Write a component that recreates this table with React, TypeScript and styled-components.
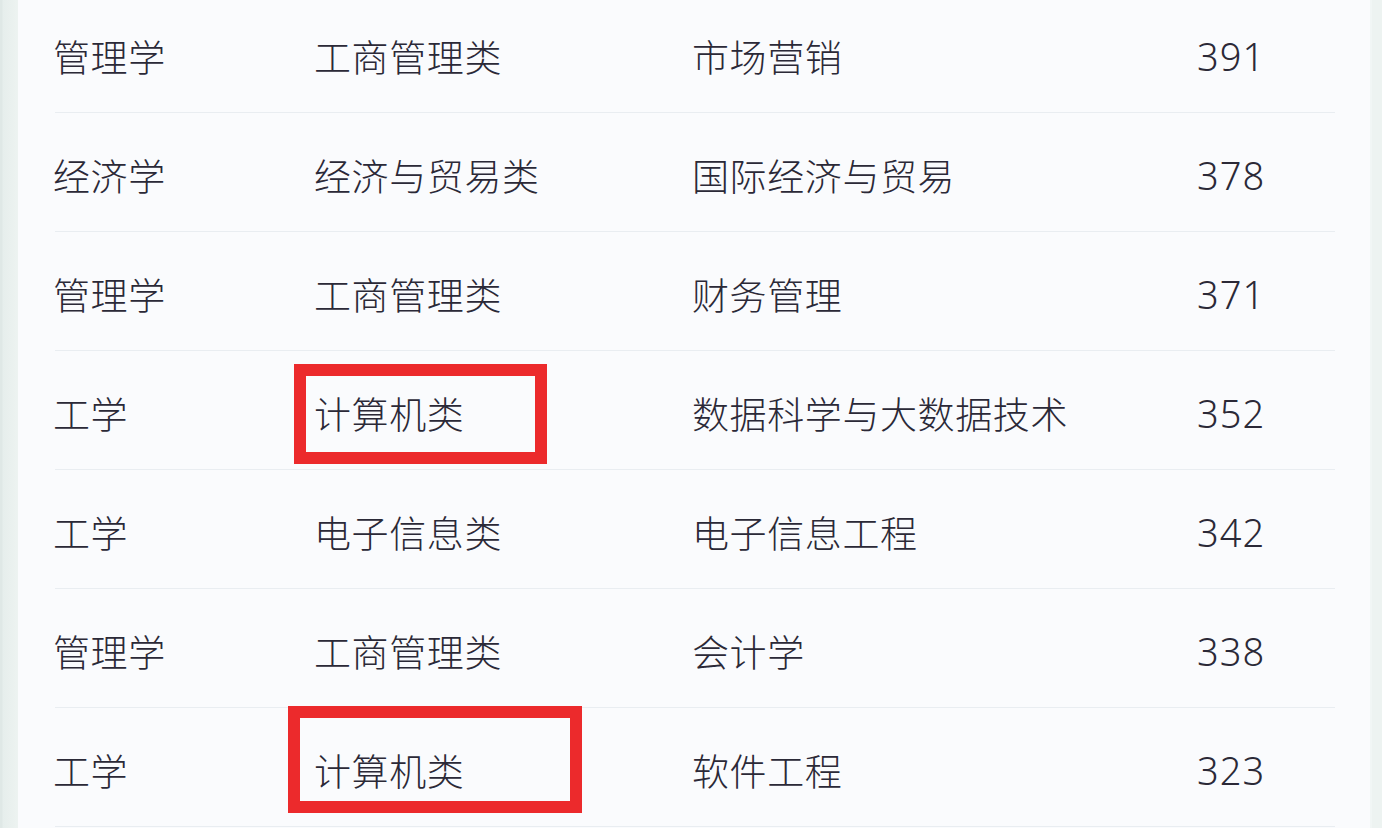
import styled, { createGlobalStyle } from 'styled-components'

const GlobalStyle = createGlobalStyle`
  html, body {
    margin: 0;
    padding: 0;
    background: #eef3f2;
    overflow: hidden;
  }
`

type Highlight = { left: number; width: number; top: number; bottom: number }

const rows: { subject: string; category: string; major: string; score: number; box?: Highlight }[] = [
  { subject: '管理学', category: '工商管理类', major: '市场营销', score: 391 },
  { subject: '经济学', category: '经济与贸易类', major: '国际经济与贸易', score: 378 },
  { subject: '管理学', category: '工商管理类', major: '财务管理', score: 371 },
  {
    subject: '工学',
    category: '计算机类',
    major: '数据科学与大数据技术',
    score: 352,
    box: { left: -20, width: 253, top: 13, bottom: 5 },
  },
  { subject: '工学', category: '电子信息类', major: '电子信息工程', score: 342 },
  { subject: '管理学', category: '工商管理类', major: '会计学', score: 338 },
  {
    subject: '工学',
    category: '计算机类',
    major: '软件工程',
    score: 323,
    box: { left: -26, width: 294, top: -2, bottom: 13 },
  },
]

export default function App() {
  return (
    <>
      <GlobalStyle />
      <Page>
        <Card>
          <Table>
            {rows.map((r, i) => (
              <Row key={i}>
                <Cell>{r.subject}</Cell>
                <Cell>
                  {r.category}
                  {r.box && (
                    <RedBox
                      style={{
                        left: r.box.left,
                        width: r.box.width,
                        top: r.box.top,
                        bottom: r.box.bottom,
                      }}
                    />
                  )}
                </Cell>
                <Cell>{r.major}</Cell>
                <Score>{r.score}</Score>
              </Row>
            ))}
          </Table>
        </Card>
      </Page>
    </>
  )
}

const Page = styled.div`
  width: 1382px;
  height: 828px;
  display: flex;
  background: linear-gradient(90deg, #dfe8e6 0, #dfe8e6 2px, #e6eeec 3px, #edf3f1 18px);
  overflow: hidden;
`

const Card = styled.div`
  margin-left: 18px;
  width: 1352px;
  height: 100%;
  background: #fafbfd;
  border-right: 2px solid #f1f6f5;
`

const Table = styled.div`
  display: flex;
  flex-direction: column;
  margin: -6px 35px 0 37px;
  width: 1280px;
`

const Row = styled.div`
  display: grid;
  grid-template-columns: 261px 378px 503px 1fr;
  align-items: center;
  height: 118px;
  border-bottom: 1px solid #e9edf1;
`

const Cell = styled.div`
  position: relative;
  height: 100%;
  display: flex;
  align-items: center;
  margin-left: -2px;
  padding-top: 5px;
  box-sizing: border-box;
  font-family: 'Noto Sans CJK SC', 'Noto Sans', sans-serif;
  font-size: 37px;
  font-weight: 300;
  letter-spacing: 0.6px;
  color: #2b2937;
`

const Score = styled.div`
  display: flex;
  align-items: center;
  height: 100%;
  padding-top: 5px;
  box-sizing: border-box;
  font-family: 'Noto Sans', 'Liberation Sans', sans-serif;
  font-size: 38px;
  font-weight: 300;
  letter-spacing: 1px;
  color: #2b2937;
`

const RedBox = styled.div`
  position: absolute;
  box-sizing: border-box;
  border: 12px solid #ec2a2c;
  pointer-events: none;
`
